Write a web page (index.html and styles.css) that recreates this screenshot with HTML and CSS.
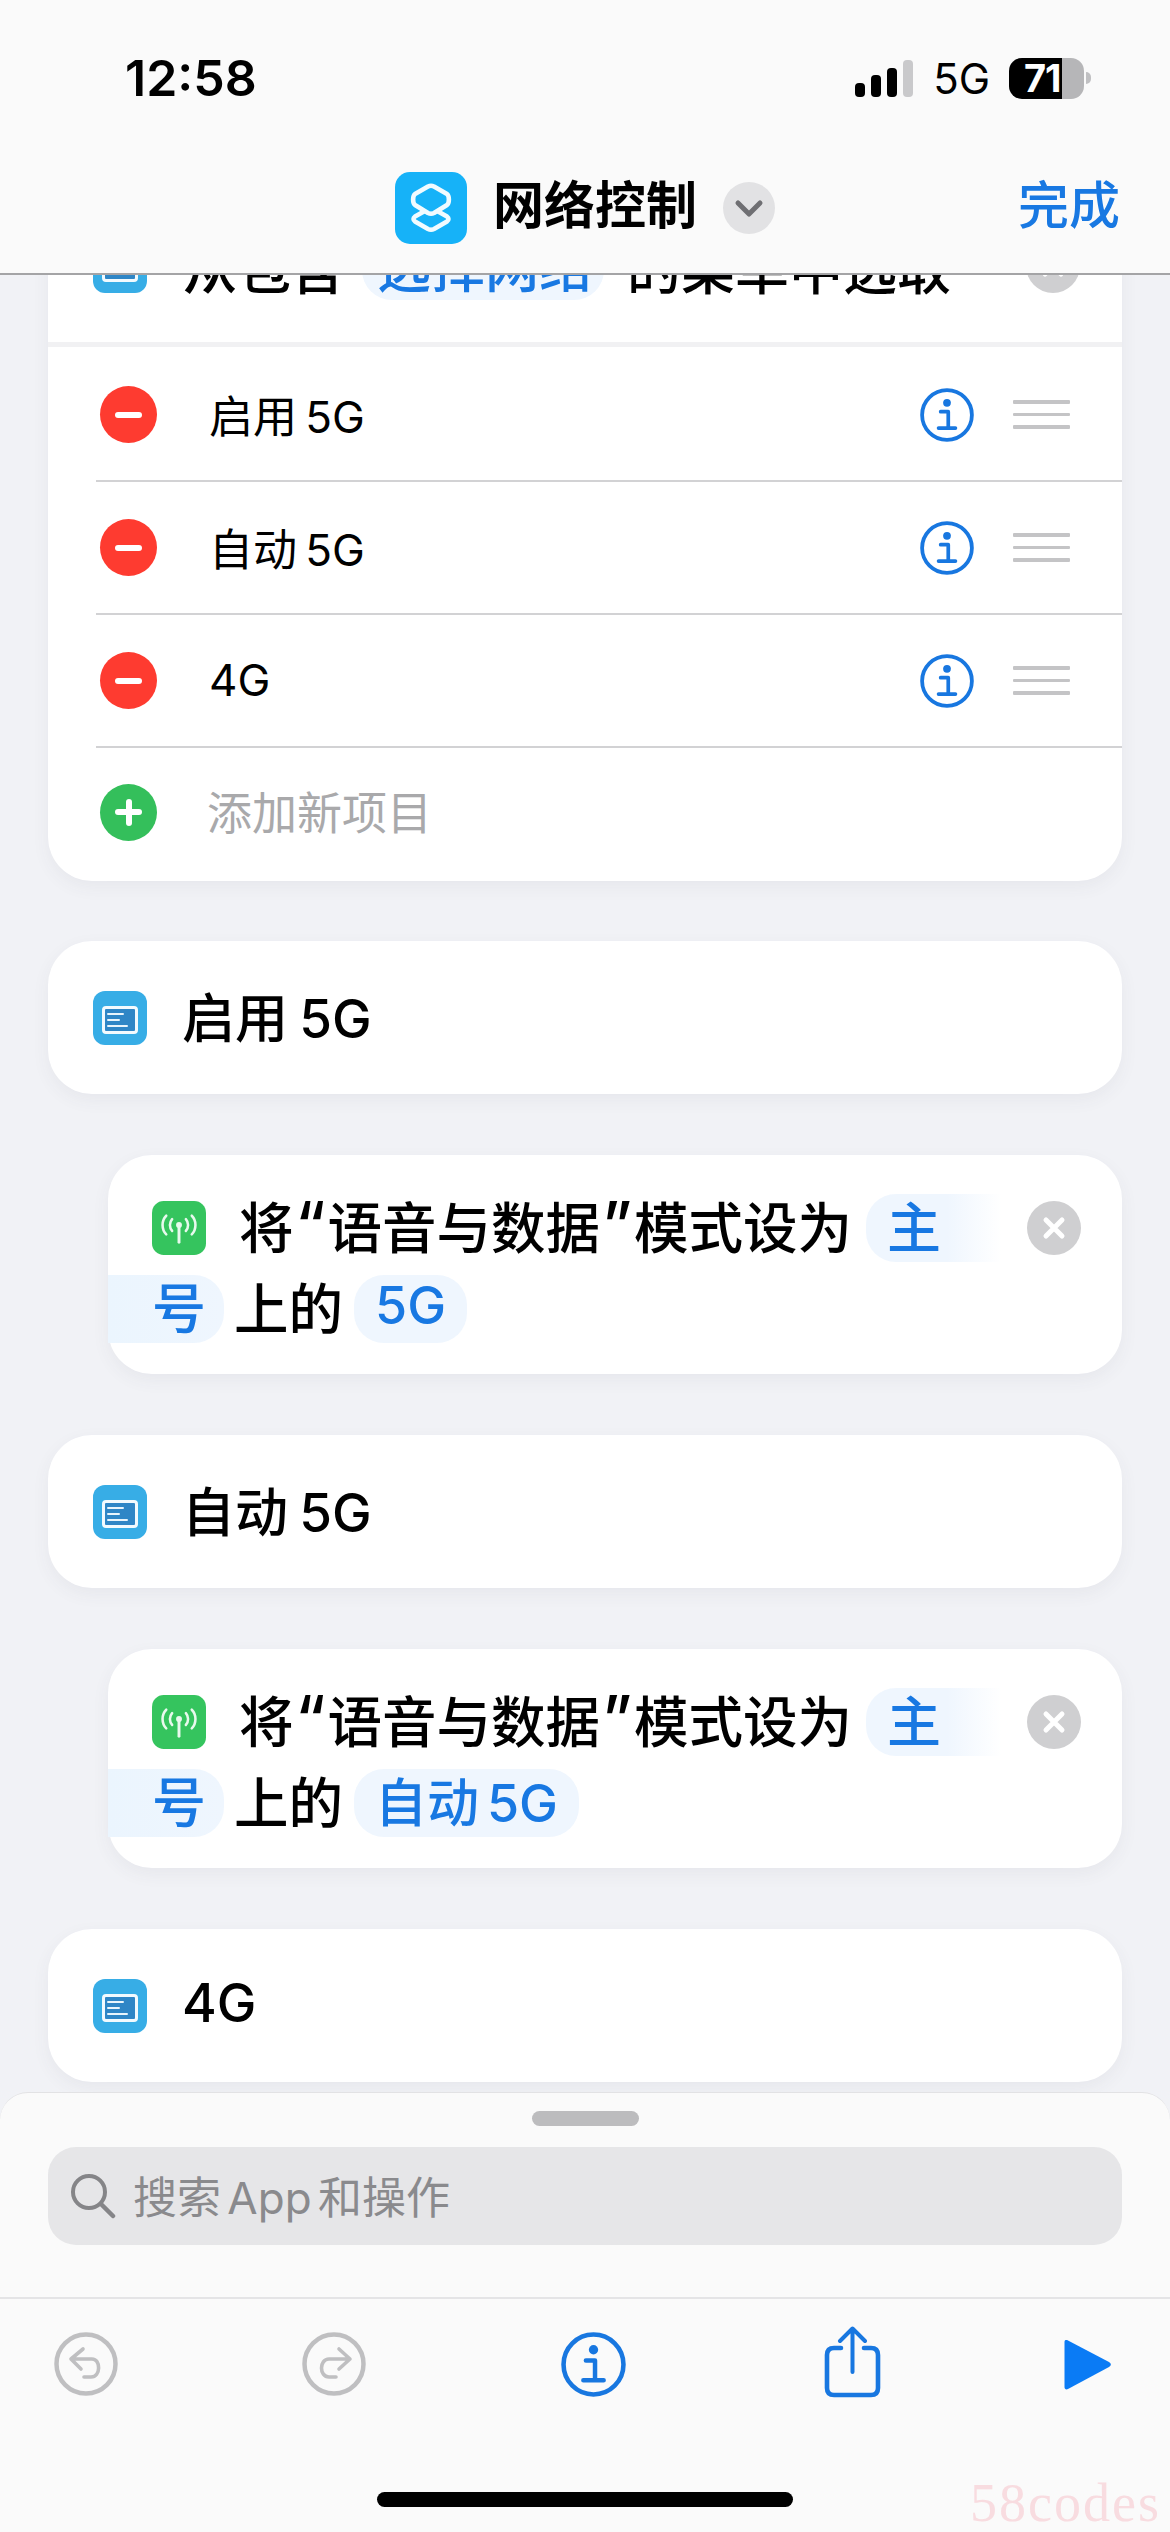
FILE: index.html
```html
<!DOCTYPE html>
<html lang="zh-CN">
<head>
<meta charset="utf-8">
<title>网络控制</title>
<link rel="stylesheet" href="styles.css">
</head>
<body>
<div class="screen">
  <svg class="defs" width="0" height="0" aria-hidden="true">
    <defs>
      <symbol id="i-info" viewBox="0 0 64 64">
        <circle cx="32" cy="32" r="29.5" fill="none" stroke="currentColor" stroke-width="4.5"/>
        <circle cx="32" cy="17.5" r="4.6" fill="currentColor"/>
        <path d="M24.5 28H33.5V47M22 47.5H42" fill="none" stroke="currentColor" stroke-width="4.4" stroke-linecap="round" stroke-linejoin="round"/>
      </symbol>
      <symbol id="i-close" viewBox="0 0 54 54">
        <circle cx="27" cy="27" r="27" fill="#cfcfd1"/>
        <path d="M19 19L35 35M35 19L19 35" stroke="#fff" stroke-width="5" stroke-linecap="round"/>
      </symbol>
      <symbol id="i-menu" viewBox="0 0 54 54">
        <rect width="54" height="54" rx="12" fill="#37ade6"/>
        <rect x="10.5" y="16.5" width="33" height="25" rx="2.5" fill="#2f86c6" stroke="#f2fafe" stroke-width="3"/>
        <path d="M15 23H30M15 29H26M15 35H34" stroke="#e9f5fc" stroke-width="2" stroke-linecap="round"/>
      </symbol>
      <symbol id="i-antenna" viewBox="0 0 55 55">
        <rect width="55" height="55" rx="12" fill="#35c45e"/>
        <g fill="none" stroke="#e8f9ed" stroke-width="2.6" stroke-linecap="round">
          <path d="M20.5 18.5C17.5 22 17.5 27 20.5 30.5M34.5 18.5C37.5 22 37.5 27 34.5 30.5"/>
          <path d="M14.5 15C9.5 20 9.5 29 14.5 34M40.5 15C45.5 20 45.5 29 40.5 34"/>
          <path d="M27.5 25V42" stroke-width="3"/>
        </g>
        <circle cx="27.5" cy="24.5" r="3" fill="#e8f9ed"/>
      </symbol>
    </defs>
  </svg>

  <main class="scroller">
    <section class="card card-list">
      <div class="action-row">
        <svg class="glyph"><use href="#i-menu"/></svg>
        <div class="action-text">从包含<span class="chip chip-top">选择网络</span>的菜单中选取</div>
        <svg class="close"><use href="#i-close"/></svg>
      </div>
      <div class="strip"></div>
      <div class="list-row">
        <span class="badge badge-red"></span>
        <span class="row-label label-a">启用 5G</span>
        <svg class="info"><use href="#i-info"/></svg>
        <span class="drag"><i></i><i></i><i></i></span>
      </div>
      <div class="list-row">
        <span class="badge badge-red"></span>
        <span class="row-label label-b">自动 5G</span>
        <svg class="info"><use href="#i-info"/></svg>
        <span class="drag"><i></i><i></i><i></i></span>
      </div>
      <div class="list-row">
        <span class="badge badge-red"></span>
        <span class="row-label label-c">4G</span>
        <svg class="info"><use href="#i-info"/></svg>
        <span class="drag"><i></i><i></i><i></i></span>
      </div>
      <div class="list-row list-row-last">
        <span class="badge badge-green"></span>
        <span class="row-label label-add">添加新项目</span>
      </div>
    </section>

    <section class="card card-case">
      <svg class="glyph"><use href="#i-menu"/></svg>
      <span class="case-title">启用 5G</span>
    </section>

    <section class="card card-action">
      <div class="line line-one">
        <svg class="glyph"><use href="#i-antenna"/></svg>
        <span class="phrase">将<span class="quote">“</span>语音与数据<span class="quote">”</span>模式设为</span>
        <span class="chip chip-fade-end">主</span>
        <svg class="close"><use href="#i-close"/></svg>
      </div>
      <div class="line">
        <span class="chip chip-fade-start">号</span>
        <span class="phrase phrase-tail">上的</span>
        <span class="chip">5G</span>
      </div>
    </section>

    <section class="card card-case">
      <svg class="glyph"><use href="#i-menu"/></svg>
      <span class="case-title">自动 5G</span>
    </section>

    <section class="card card-action">
      <div class="line line-one">
        <svg class="glyph"><use href="#i-antenna"/></svg>
        <span class="phrase">将<span class="quote">“</span>语音与数据<span class="quote">”</span>模式设为</span>
        <span class="chip chip-fade-end">主</span>
        <svg class="close"><use href="#i-close"/></svg>
      </div>
      <div class="line">
        <span class="chip chip-fade-start">号</span>
        <span class="phrase phrase-tail">上的</span>
        <span class="chip">自动 5G</span>
      </div>
    </section>

    <section class="card card-case">
      <svg class="glyph"><use href="#i-menu"/></svg>
      <span class="case-title">4G</span>
    </section>
  </main>

  <header class="topbar">
    <div class="status">
      <span class="time">12:58</span>
      <span class="status-right">
        <span class="signal"><i class="s1"></i><i class="s2"></i><i class="s3"></i><i class="s4"></i></span>
        <span class="net">5G</span>
        <span class="battery"><span class="battery-num">71</span></span>
        <span class="battery-nub"></span>
      </span>
    </div>
    <nav class="navrow">
      <span></span>
      <div class="nav-title">
        <svg class="app-icon" viewBox="0 0 72 72">
          <rect width="72" height="72" rx="15" fill="#16b2f8"/>
          <g fill="none" stroke="#f1fbff" stroke-width="4.6" stroke-linejoin="round">
            <path d="M20 44.5L36 35.5L52 44.5C54 46 54 48 52 49.500L39 57C37 58 35 58 33 57L20 49.500C18 48 18 46 20 44.5Z"/>
            <path d="M33 14.500C35 13.500 37 13.500 39 14.500L52 22C54.500 24 54.500 31 52 33L39 41C37 42 35 42 33 41L20 33C17.500 31 17.500 24 20 22Z" fill="#16b2f8"/>
          </g>
        </svg>
        <span class="nav-name">网络控制</span>
        <span class="chev">
          <svg viewBox="0 0 52 52" width="52" height="52"><path d="M15 21L26 32L37 21" fill="none" stroke="#6f6f73" stroke-width="5" stroke-linecap="round" stroke-linejoin="round"/></svg>
        </span>
      </div>
      <span class="done">完成</span>
    </nav>
  </header>

  <aside class="sheet">
    <div class="handle"></div>
    <div class="search">
      <svg class="search-icon" viewBox="0 0 46 46"><circle cx="19" cy="19" r="16" fill="none" stroke="#858588" stroke-width="4"/><path d="M31 31L43 43" stroke="#858588" stroke-width="4.500" stroke-linecap="round"/></svg>
      <span class="search-text">搜索 App 和操作</span>
    </div>
    <div class="toolbar">
      <svg class="tool tool-undo" viewBox="0 0 64 64"><circle cx="32" cy="32" r="29.500" fill="none" stroke="#bfbfc1" stroke-width="4.500"/><path d="M29 17L17 27L27 37M18 27H38C47 27 47 45 37 45H30" fill="none" stroke="#bfbfc1" stroke-width="3.600" stroke-linecap="round" stroke-linejoin="round"/></svg>
      <svg class="tool tool-redo" viewBox="0 0 64 64"><circle cx="32" cy="32" r="29.500" fill="none" stroke="#bfbfc1" stroke-width="4.500"/><path d="M37 17L48 27L37 37M47 27H27C17 27 17 45 27 45H34" fill="none" stroke="#bfbfc1" stroke-width="3.600" stroke-linecap="round" stroke-linejoin="round"/></svg>
      <svg class="tool tool-info"><use href="#i-info"/></svg>
      <svg class="tool tool-share" viewBox="0 0 57 72"><path d="M17 22H10C5.500 22 3 24.500 3 29V62C3 66.500 5.500 69 10 69H47C51.500 69 54 66.500 54 62V29C54 24.500 51.500 22 47 22H40" fill="none" stroke="#1877e0" stroke-width="4.600" stroke-linecap="round"/><path d="M28.500 46V3M16 15L28.500 2.500L41 15" fill="none" stroke="#1877e0" stroke-width="4" stroke-linecap="round" stroke-linejoin="round"/></svg>
      <svg class="tool tool-play" viewBox="0 0 48 55"><path d="M4 3.500L45 25C47.500 26.500 47.500 28.500 45 30L4 52C2 53 0.500 52 0.500 50V5C0.500 3 2 2.500 4 3.500Z" fill="#0a7bf5"/></svg>
    </div>
    <div class="home"></div>
    <div class="mark">58codes</div>
  </aside>
</div>
</body>
</html>
```
FILE: styles.css
```css
* { box-sizing: border-box; }
html, body { margin: 0; padding: 0; }
body {
  width: 1170px;
  height: 2532px;
  overflow: hidden;
  background: #f1f2f6;
  font-family: Inter, "Noto Sans CJK SC", sans-serif;
  color: #000;
}
.screen { position: relative; width: 1170px; height: 2532px; overflow: hidden; }
.defs { position: absolute; }

/* scrolling content */
.scroller {
  display: flex;
  flex-direction: column;
  padding: 0 48px;
  margin-top: 200px;
}
.card {
  background: #fff;
  border-radius: 44px;
  box-shadow: 0 6px 18px rgba(60, 60, 80, .06);
}
.glyph { width: 54px; height: 54px; flex: none; }
.close { width: 54px; height: 54px; flex: none; }

.card-list { border-radius: 0 0 44px 44px; margin-bottom: 60px; }
.action-row {
  display: flex;
  align-items: center;
  height: 142px;
  padding: 0 42px 10px 45px;
}
.action-text {
  display: flex;
  align-items: center;
  margin-left: 36px;
  font-size: 54px;
  font-weight: 500;
  white-space: nowrap;
}
.action-row .close { margin-left: auto; }
.strip { height: 5px; background: #f1f1f3; }

.chip {
  display: inline-flex;
  align-items: center;
  height: 68px;
  padding: 0 21px 6px;
  border-radius: 30px;
  background: #eff6fe;
  color: #1878e2;
  font-size: 52px;
  font-weight: 500;
  word-spacing: -6px;
  white-space: nowrap;
}
.chip-top { margin: 0 23px 0 17px; padding: 0 11px 4px 15px; font-size: 54px; }

.list-row {
  display: flex;
  align-items: center;
  height: 133px;
  margin-left: 48px;
  border-bottom: 2px solid #d2d2d4;
  font-size: 44px;
}
.strip + .list-row { height: 135px; padding-top: 2px; }
.list-row-last { border-bottom: 0; padding-bottom: 5px; }
.badge {
  position: relative;
  width: 57px;
  height: 57px;
  margin-left: 4px;
  border-radius: 50%;
  flex: none;
}
.badge-red { background: #fe3b30; }
.badge-green { background: #34bf5b; }
.badge::before {
  content: "";
  position: absolute;
  left: 15px;
  top: 25.500px;
  width: 27px;
  height: 6px;
  border-radius: 3px;
  background: #fff;
}
.badge-green::after {
  content: "";
  position: absolute;
  left: 25.500px;
  top: 15px;
  width: 6px;
  height: 27px;
  border-radius: 3px;
  background: #fff;
}
.row-label { padding-bottom: 2px; white-space: nowrap; word-spacing: -4px; }
.label-a { margin-left: 52px; }
.label-b { margin-left: 52px; }
.label-c { margin-left: 52px; }
.label-add { margin-left: 50px; padding-bottom: 3px; font-size: 45px; color: #a9a9ab; }
.info { width: 54px; height: 54px; color: #1877e0; margin-left: auto; flex: none; }
.drag {
  display: flex;
  flex-direction: column;
  gap: 9px;
  width: 57px;
  margin: 0 52px 0 39px;
  flex: none;
}
.drag i { display: block; height: 3.500px; background: #c4c4c6; border-radius: 1px; }

.card-case {
  display: flex;
  align-items: center;
  height: 153px;
  padding: 0 45px;
  margin-bottom: 61px;
}
.case-title {
  margin-left: 35px;
  padding-bottom: 5px;
  font-size: 53px;
  font-weight: 500;
  word-spacing: -3px;
  white-space: nowrap;
}
.card-action {
  margin: 0 0 61px 60px;
  height: 219px;
  padding: 32px 41px 25px 0;
}
.line { display: flex; align-items: center; height: 81px; }
.line-one { padding-left: 44px; }
.phrase { padding-bottom: 6px; font-size: 54.500px; font-weight: 500; white-space: nowrap; }
.line-one .phrase { margin-left: 33px; }
.quote { display: inline-block; width: 34px; font-size: 64px; line-height: 1; text-align: center; }
.line-one .close { margin-left: auto; }
.phrase-tail { margin: 0 11px 0 10px; }
.chip-fade-end {
  width: 135px;
  margin-left: 14px;
  border-radius: 30px 0 0 30px;
  font-size: 54px;
  background: linear-gradient(90deg, #eff6fe 60%, #ffffff 100%);
}
.chip-fade-start {
  width: 116px;
  padding: 0 0 6px 44px;
  border-radius: 0 30px 30px 0;
  font-size: 54px;
  background: linear-gradient(90deg, #ebf5fe 0%, #eff6fe 100%);
}

/* top bar */
.topbar {
  position: absolute;
  left: 0;
  top: 0;
  width: 1170px;
  height: 275px;
  background: #fafafa;
  border-bottom: 2px solid #a4a4a6;
}
.status {
  display: flex;
  align-items: center;
  justify-content: space-between;
  height: 78px;
  margin-top: 39px;
  padding: 0 79px 0 125px;
}
.time { font-size: 50px; font-weight: 600; }
.status-right { display: flex; align-items: center; }
.signal { display: flex; align-items: flex-end; gap: 6px; height: 37px; margin-right: 20px; }
.signal i { display: block; width: 10px; background: #000; border-radius: 4px; }
.s1 { height: 14px; }
.s2 { height: 22px; }
.s3 { height: 29px; }
.signal .s4 { height: 37px; background: #c9c9cb; }
.net { font-size: 42px; font-weight: 400; margin-right: 19px; }
.battery {
  display: flex;
  align-items: center;
  width: 75px;
  height: 41px;
  padding-left: 15px;
  border-radius: 13px;
  background: linear-gradient(90deg, #000 53px, #b6b6b8 53px);
}
.battery-num { color: #fff; font-size: 38px; font-weight: 700; letter-spacing: -1px; }
.battery-nub {
  width: 5px;
  height: 12px;
  margin-left: 2px;
  border-radius: 0 6px 6px 0;
  background: #c0c0c2;
}
.navrow {
  display: grid;
  grid-template-columns: 1fr auto 1fr;
  align-items: center;
  height: 72px;
  margin-top: 55px;
}
.nav-title { display: flex; align-items: center; }
.app-icon { width: 72px; height: 72px; flex: none; }
.nav-name { margin-left: 26px; padding-bottom: 5px; font-size: 51px; line-height: 1.2; font-weight: 700; white-space: nowrap; }
.chev {
  display: block;
  width: 52px;
  height: 52px;
  margin-left: 26px;
  border-radius: 50%;
  background: #e2e2e4;
}
.done {
  justify-self: end;
  padding: 0 50px 5px 0;
  font-size: 51px;
  line-height: 1.2;
  font-weight: 500;
  color: #1878e2;
}

/* bottom sheet */
.sheet {
  position: absolute;
  left: 0;
  top: 2092px;
  width: 1170px;
  height: 440px;
  background: #fafafa;
  border-radius: 28px 28px 0 0;
  border-top: 1.500px solid #e2e2e4;
}
.handle {
  width: 107px;
  height: 15px;
  margin: 18px auto 0;
  border-radius: 8px;
  background: #bcbcbe;
}
.search {
  display: flex;
  align-items: center;
  height: 98px;
  margin: 21px 48px 0;
  padding-left: 22px;
  border-radius: 28px;
  background: #e6e6e8;
}
.search-icon { width: 46px; height: 46px; flex: none; }
.search-text { margin-left: 17px; padding-bottom: 2px; font-size: 44px; word-spacing: -6px; color: #8a8a8d; white-space: nowrap; }
.toolbar {
  display: flex;
  align-items: flex-start;
  height: 131px;
  margin-top: 52px;
  padding: 33px 0 0 54px;
  border-top: 2px solid #e4e4e6;
}
.tool { width: 64px; height: 64px; flex: none; }
.tool-redo { margin-left: 184px; }
.tool-info { margin-left: 195px; width: 65px; height: 65px; color: #1877e0; }
.tool-share { margin: -6px 0 0 198px; width: 57px; height: 72px; }
.tool-play { margin: 5px 0 0 183px; width: 48px; height: 55px; }
.home {
  width: 416px;
  height: 15px;
  margin: 64px 0 0 377px;
  border-radius: 8px;
  background: #000;
}
.mark {
  position: absolute;
  left: 970px;
  top: 380px;
  font-family: "Liberation Serif", serif;
  font-size: 54px;
  letter-spacing: 2px;
  line-height: 60px;
  color: #f8dce0;
  white-space: nowrap;
}
```
